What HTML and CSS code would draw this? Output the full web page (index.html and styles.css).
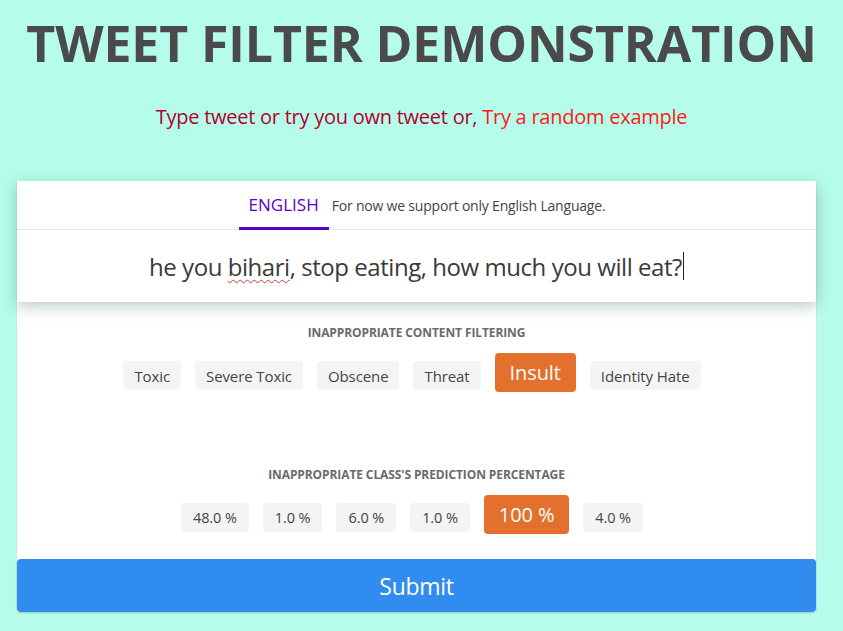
FILE: index.html
```html
<!DOCTYPE html>
<html lang="en">
<head>
<meta charset="utf-8">
<title>Tweet Filter Demonstration</title>
<link rel="stylesheet" href="styles.css">
</head>
<body>
<h1 class="title">TWEET FILTER DEMONSTRATION</h1>
<p class="subtitle">Type tweet or try you own tweet or, <a class="random" href="#">Try a random example</a></p>
<main class="card">
  <section class="paper">
    <div class="tabs">
      <span class="tab active">ENGLISH</span>
      <span class="tab-note">For now we support only English Language.</span>
    </div>
    <div class="input-row">
      <span class="tweet">he you <span class="misspelled">bihari</span>, stop eating, how much you will eat?</span><span class="caret"></span>
    </div>
  </section>
  <section class="results">
    <h2 class="label">INAPPROPRIATE CONTENT FILTERING</h2>
    <div class="chips">
      <span class="chip">Toxic</span>
      <span class="chip">Severe Toxic</span>
      <span class="chip">Obscene</span>
      <span class="chip">Threat</span>
      <span class="chip hot">Insult</span>
      <span class="chip">Identity Hate</span>
    </div>
    <h2 class="label label-2">INAPPROPRIATE CLASS'S PREDICTION PERCENTAGE</h2>
    <div class="chips">
      <span class="chip pct">48.0 %</span>
      <span class="chip pct">1.0 %</span>
      <span class="chip pct">6.0 %</span>
      <span class="chip pct">1.0 %</span>
      <span class="chip hot pct">100 %</span>
      <span class="chip pct">4.0 %</span>
    </div>
  </section>
  <button class="submit" type="button">Submit</button>
</main>
</body>
</html>
```

FILE: styles.css
```css
* { box-sizing: border-box; }
html, body { margin: 0; padding: 0; }
body {
  background: #b5fdea;
  font-family: "Open Sans", "Noto Sans", sans-serif;
  color: #444;
  height: 631px;
  overflow: hidden;
}
.title {
  margin: 0;
  padding-top: 12px;
  text-align: center;
  font-size: 50px;
  line-height: 62px;
  font-weight: 700;
  color: #4a4a4a;
  letter-spacing: -0.1px;
}
.subtitle {
  margin: 30px 0 0;
  text-align: center;
  font-size: 20px;
  line-height: 26px;
  color: #b3002d;
  letter-spacing: -0.25px;
}
.random { color: #ff1a1a; text-decoration: none; }
.card {
  margin: 51px 26px 0 16px;
  background: #fff;
  border-left: 1px solid #c9e9df;
  border-right: 1px solid #c9e9df;
}
.paper {
  background: #fff;
  box-shadow: 0 4px 14px rgba(0, 60, 40, 0.28);
  position: relative;
}
.tabs {
  display: flex;
  justify-content: center;
  align-items: center;
  gap: 3px;
  height: 49px;
  padding-left: 11px;
  border-bottom: 1px solid #e6e6e6;
}
.tab {
  height: 49px;
  display: flex;
  align-items: center;
  padding: 0 10px;
  padding-top: 2px;
  font-size: 17px;
  color: #5b00c8;
  border-bottom: 3px solid #5b00c8;
}
.tab-note { font-size: 14px; color: #444; letter-spacing: -0.2px; }
.input-row {
  height: 72px;
  display: flex;
  justify-content: center;
  align-items: center;
  font-size: 24px;
  color: #3a3a3a;
  letter-spacing: -0.45px;
}
.misspelled {
  text-decoration: underline wavy #e03030;
  text-decoration-thickness: 1px;
  text-underline-offset: 3px;
}
.caret { display: inline-block; width: 1px; height: 28px; background: #222; margin-left: 1px; }
.results {
  height: 257px;
  padding-top: 23px;
}
.label {
  margin: 0;
  text-align: center;
  font-size: 12px;
  line-height: 16px;
  font-weight: 700;
  color: #6a6a6a;
  letter-spacing: -0.1px;
}
.label-2 { margin-top: 75px; }
.chips {
  display: flex;
  justify-content: center;
  align-items: center;
  gap: 14px;
  margin-top: 12px;
  padding-right: 9px;
}
.chip {
  background: #f4f4f4;
  border-radius: 4px;
  height: 29px;
  margin-top: 6px;
  padding: 0 11px;
  display: flex;
  align-items: center;
  font-size: 15px;
  color: #444;
  letter-spacing: -0.1px;
}
.chip.hot {
  background: #e3702d;
  color: #fff;
  height: 39px;
  margin-top: 0;
  font-size: 20px;
  padding: 0 15px;
}
.chip.pct { font-size: 14.5px; padding: 0 12px; }
.chip.hot.pct { font-size: 20px; padding: 0 15px; }
.submit {
  display: block;
  width: 100%;
  height: 53px;
  border: 0;
  border-radius: 4px;
  background: #318cf0;
  color: #fff;
  font-family: "Open Sans", "Noto Sans", sans-serif;
  font-size: 23px;
  letter-spacing: -0.3px;
  box-shadow: 0 1px 2px rgba(0,0,0,0.2);
}
```
